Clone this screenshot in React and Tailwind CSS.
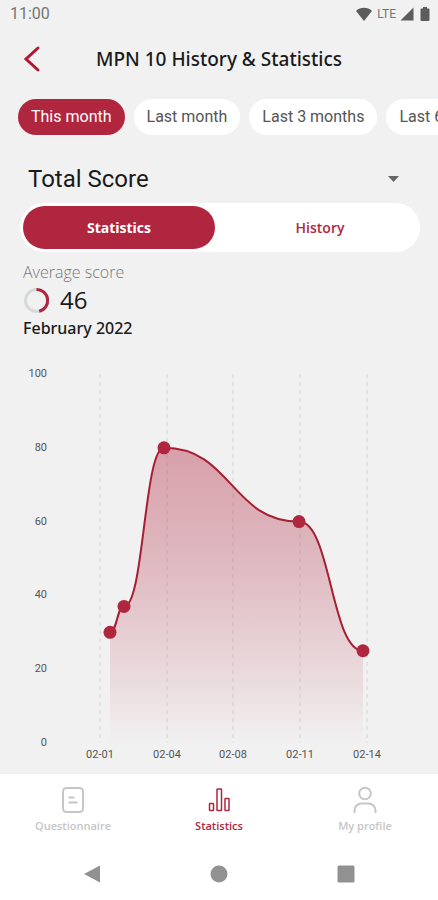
import { useState } from "react"

const ranges = ["This month", "Last month", "Last 3 months", "Last 6 months"]
const tabs = ["Statistics", "History"]

const scores = [
  { x: 110, value: 30 },
  { x: 124, value: 37 },
  { x: 164, value: 80 },
  { x: 299, value: 60 },
  { x: 363, value: 25 },
]

const dates = [
  { x: 100, label: "02-01" },
  { x: 167, label: "02-04" },
  { x: 233, label: "02-08" },
  { x: 300, label: "02-11" },
  { x: 367, label: "02-14" },
]

const CHART_TOP = 16
const CHART_BOTTOM = 385

const toY = (value) => CHART_BOTTOM - (value / 100) * (CHART_BOTTOM - CHART_TOP)

// Smooth curve that is flat at every point
function buildLine(points) {
  return points
    .map((p, i) => {
      if (i === 0) return `M${p.x} ${toY(p.value)}`
      const prev = points[i - 1]
      const mid = (prev.x + p.x) / 2
      return `C${mid} ${toY(prev.value)} ${mid} ${toY(p.value)} ${p.x} ${toY(p.value)}`
    })
    .join(" ")
}

function StatusBar() {
  return (
    <div className="flex h-7 items-center justify-between pl-2.5 pr-2 text-[#757575]">
      <span className="font-['Roboto',sans-serif] text-base">11:00</span>
      <div className="flex items-center gap-1">
        <svg width="18" height="14" viewBox="0 0 18 14" fill="#5c5c5c" aria-hidden="true">
          <path d="M9 14 1 4C3.200 1.800 6 .7 9 .7s5.800 1.100 8 3.300z" />
        </svg>
        <span className="font-['Roboto',sans-serif] text-xs">LTE</span>
        <svg width="14" height="14" viewBox="0 0 14 14" fill="#5c5c5c" aria-hidden="true">
          <path d="M13.500.5v13H.5z" />
        </svg>
        <svg className="ml-0.5" width="10" height="14" viewBox="0 0 10 14" fill="#5c5c5c" aria-hidden="true">
          <path d="M3 0h4v1.500h1.500a1 1 0 0 1 1 1V13a1 1 0 0 1-1 1h-7a1 1 0 0 1-1-1V2.500a1 1 0 0 1 1-1H3z" />
        </svg>
      </div>
    </div>
  )
}

function ScoreChart() {
  const line = buildLine(scores)
  const area = `${line} L${scores[scores.length - 1].x} ${CHART_BOTTOM} L${scores[0].x} ${CHART_BOTTOM} Z`

  return (
    <svg viewBox="0 0 438 404" className="mt-[18px] block w-full font-['Roboto',sans-serif]" role="img" aria-label="Total score by date">
      <defs>
        <linearGradient id="scoreFill" x1="0" y1="0" x2="0" y2="1">
          <stop offset="0" stopColor="#b0263f" stopOpacity="0.4" />
          <stop offset="0.4" stopColor="#b0263f" stopOpacity="0.27" />
          <stop offset="0.8" stopColor="#b0263f" stopOpacity="0.1" />
          <stop offset="1" stopColor="#b0263f" stopOpacity="0" />
        </linearGradient>
      </defs>
      {dates.map((d) => (
        <line key={d.label} x1={d.x} y1={CHART_TOP} x2={d.x} y2={CHART_BOTTOM} stroke="#d3d3d3" strokeDasharray="4 4" />
      ))}
      <path d={area} fill="url(#scoreFill)" />
      <path d={line} fill="none" stroke="#a81e30" strokeWidth="2" />
      {scores.map((s) => (
        <circle key={s.x} cx={s.x} cy={toY(s.value)} r="6.5" fill="#b0263f" />
      ))}
      {[100, 80, 60, 40, 20, 0].map((value) => (
        <text key={value} x="47" y={toY(value) + 3} textAnchor="end" fontSize="11" fill="#555">
          {value}
        </text>
      ))}
      {dates.map((d) => (
        <text key={d.label} x={d.x} y="400" textAnchor="middle" fontSize="11" fill="#555">
          {d.label}
        </text>
      ))}
    </svg>
  )
}

function QuestionnaireIcon() {
  return (
    <svg width="24" height="28" viewBox="0 0 24 28" fill="none" stroke="currentColor" strokeWidth="2" aria-hidden="true">
      <rect x="2" y="2" width="20" height="24" rx="3.500" />
      <path d="M7.500 11.500h6M7.500 16.500h9" />
    </svg>
  )
}

function StatisticsIcon() {
  return (
    <svg width="24" height="28" viewBox="0 0 24 28" fill="none" stroke="currentColor" strokeWidth="1.500" aria-hidden="true">
      <rect x="2.500" y="17.500" width="4" height="7" rx="0.500" />
      <rect x="10" y="3" width="4.500" height="21.500" rx="0.500" />
      <rect x="18" y="12.500" width="4" height="12" rx="0.500" />
    </svg>
  )
}

function ProfileIcon() {
  return (
    <svg width="24" height="28" viewBox="0 0 24 28" fill="none" stroke="currentColor" strokeWidth="2" aria-hidden="true">
      <circle cx="12" cy="7.500" r="5.800" />
      <path d="M1.500 27v-2.500a7 7 0 0 1 7-7h7a7 7 0 0 1 7 7V27" />
    </svg>
  )
}

const navItems = [
  { label: "Questionnaire", icon: QuestionnaireIcon },
  { label: "Statistics", icon: StatisticsIcon },
  { label: "My profile", icon: ProfileIcon },
]

function BottomNav() {
  return (
    <nav className="grid grid-cols-3 pt-3">
      {navItems.map(({ label, icon: Icon }) => (
        <a
          key={label}
          href="#"
          className={`flex flex-col items-center gap-1 text-[11px] leading-4 font-semibold ${
            label === "Statistics" ? "text-[#b0263f]" : "text-[#c6c6c6]"
          }`}
        >
          <Icon />
          {label}
        </a>
      ))}
    </nav>
  )
}

function SystemBar() {
  return (
    <div className="mt-auto grid grid-cols-3 justify-items-center px-7 pb-4 text-[#919191]">
      <button type="button" aria-label="Back">
        <svg width="20" height="20" viewBox="0 0 20 20" fill="currentColor" aria-hidden="true">
          <path d="M18 1.500v17L2 10z" />
        </svg>
      </button>
      <button type="button" aria-label="Home">
        <svg width="20" height="20" viewBox="0 0 20 20" fill="currentColor" aria-hidden="true">
          <circle cx="10" cy="10" r="8.500" />
        </svg>
      </button>
      <button type="button" aria-label="Recent apps">
        <svg width="20" height="20" viewBox="0 0 20 20" fill="currentColor" aria-hidden="true">
          <rect x="1.500" y="1.500" width="17" height="17" rx="1.500" />
        </svg>
      </button>
    </div>
  )
}

export default function App() {
  const [range, setRange] = useState("This month")
  const [tab, setTab] = useState("Statistics")

  return (
    <div className="flex min-h-screen flex-col overflow-x-hidden bg-[#f1f1f1] font-['Open_Sans',sans-serif] text-[#1a1a1a]">
      <StatusBar />

      <header className="grid h-[62px] grid-cols-[48px_1fr_48px] items-center px-2">
        <button type="button" aria-label="Go back" className="flex justify-center">
          <svg width="18" height="28" viewBox="0 0 18 28" fill="none" stroke="#b0182f" strokeWidth="3" strokeLinecap="round" aria-hidden="true">
            <path d="M15 3 3 14l12 11" />
          </svg>
        </button>
        <h1 className="text-center font-['Noto_Sans',sans-serif] text-[19px] font-medium whitespace-nowrap">
          MPN 10 History &amp; Statistics
        </h1>
      </header>

      <div className="mt-[9px] flex gap-[9px] overflow-x-auto pl-[18px] font-['Roboto',sans-serif] [scrollbar-width:none]">
        {ranges.map((item) => (
          <button
            key={item}
            type="button"
            onClick={() => setRange(item)}
            className={`h-9 shrink-0 rounded-full px-[13px] text-base ${
              item === range ? "bg-[#b0263f] text-white" : "bg-white text-[#555]"
            }`}
          >
            {item}
          </button>
        ))}
      </div>

      <div className="mt-6 flex items-center pr-9 pl-7">
        <select
          aria-label="Score type"
          className="h-10 flex-1 appearance-none bg-transparent font-['Roboto',sans-serif] text-2xl"
        >
          <option>Total Score</option>
        </select>
        <svg width="18" height="18" viewBox="0 0 18 18" fill="#666" aria-hidden="true">
          <path d="M4 6h11l-5.500 6z" />
        </svg>
      </div>

      <div className="mt-1 mr-[18px] ml-5 grid h-[49px] grid-cols-[192px_1fr] gap-2 rounded-full bg-white p-[3px]">
        {tabs.map((item) => (
          <button
            key={item}
            type="button"
            onClick={() => setTab(item)}
            className={`rounded-full text-sm ${
              item === tab ? "bg-[#b0263f] font-bold text-white" : "font-semibold text-[#b0263f]"
            }`}
          >
            {item}
          </button>
        ))}
      </div>

      <section className="mt-2 px-[23px]">
        <p className="text-base leading-6 font-light text-[#777]">Average score</p>
        <div className="flex h-8 items-center gap-2.5">
          <svg width="27" height="27" viewBox="0 0 27 27" fill="none" strokeWidth="3" aria-hidden="true">
            <circle cx="13.500" cy="13.500" r="11" stroke="#d5d9d9" />
            <path d="M13.500 2.500a11 11 0 0 1 2.700 21.700" stroke="#b0263f" />
          </svg>
          <span className="text-2xl">46</span>
        </div>
        <p className="font-['Noto_Sans',sans-serif] text-base leading-6 font-medium">February 2022</p>
      </section>

      <ScoreChart />

      <footer className="mt-auto flex h-[126px] flex-col bg-white">
        <BottomNav />
        <SystemBar />
      </footer>
    </div>
  )
}
